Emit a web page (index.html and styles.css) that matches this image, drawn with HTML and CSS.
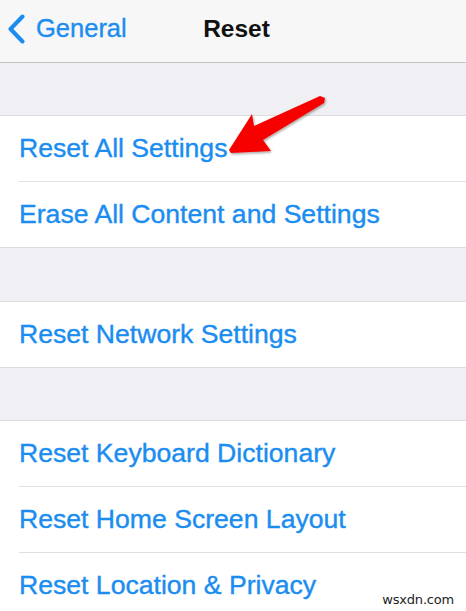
FILE: index.html
```html
<!DOCTYPE html>
<html lang="en">
<head>
<meta charset="utf-8">
<title>Reset</title>
<link rel="stylesheet" href="styles.css">
</head>
<body>
<div class="screen">
  <header class="nav">
    <a class="back" href="#">
      <svg class="chevron" width="18" height="30" viewBox="0 0 18 30"><path d="M15.5 2.5 L3.5 15 L15.5 27.5" fill="none" stroke="#1b8df0" stroke-width="4" stroke-linecap="round" stroke-linejoin="round"/></svg>
      <span>General</span>
    </a>
    <h1 class="title">Reset</h1>
    <div class="spacer"></div>
  </header>

  <div class="gap"></div>
  <ul class="group">
    <li class="row">Reset All Settings</li>
    <li class="row">Erase All Content and Settings</li>
  </ul>

  <div class="gap gap-wide"></div>
  <ul class="group">
    <li class="row">Reset Network Settings</li>
  </ul>

  <div class="gap"></div>
  <ul class="group">
    <li class="row">Reset Keyboard Dictionary</li>
    <li class="row">Reset Home Screen Layout</li>
    <li class="row">Reset Location &amp; Privacy</li>
  </ul>

  <svg class="arrow" width="466" height="611" viewBox="0 0 466 611">
    <defs>
      <filter id="sh" x="-20%" y="-20%" width="140%" height="140%">
        <feDropShadow dx="1" dy="1.5" stdDeviation="1.2" flood-color="#000" flood-opacity="0.35"/>
      </filter>
    </defs>
    <polygon filter="url(#sh)" fill="#f60000" points="229,150 252,114 254,126 320,96 325,98 324,103 263,140 271,151 231,153"/>
  </svg>

  <div class="watermark">wsxdn.com</div>
</div>
</body>
</html>
```
FILE: styles.css
```css
* { box-sizing: border-box; }
html, body {
  margin: 0;
  padding: 0;
}
body {
  width: 466px;
  height: 611px;
  overflow: hidden;
  background: #efeff4;
  font-family: "Liberation Sans", Arial, sans-serif;
}
.screen {
  position: relative;
  width: 466px;
  height: 611px;
  overflow: hidden;
}
.nav {
  height: 63px;
  background: #f7f7f8;
  border-bottom: 1px solid #c4c4c8;
  display: grid;
  grid-template-columns: 1fr auto 1fr;
  align-items: center;
  padding-bottom: 5px;
}
.back {
  display: flex;
  align-items: center;
  gap: 11px;
  padding-left: 7px;
  color: #1b8df0;
  text-decoration: none;
  font-size: 25.5px;
  -webkit-text-stroke: 0.35px #1b8df0;
}
.chevron { display: block; }
.title {
  margin: 0;
  padding-left: 7px;
  font-size: 24.5px;
  font-weight: bold;
  color: #111;
}
.gap {
  height: 52px;
  background: #efeff4;
}
.gap-wide { height: 53px; }
.group {
  list-style: none;
  margin: 0;
  padding: 0 0 0 19px;
  background: #fff;
  border-top: 1px solid #dcdcde;
  border-bottom: 1px solid #dcdcde;
}
.row {
  height: 66px;
  display: flex;
  align-items: center;
  color: #1b8df0;
  font-size: 26.6px;
  -webkit-text-stroke: 0.4px #1b8df0;
  border-bottom: 1px solid #e0e0e2;
}
.row:last-child {
  height: 65px;
  border-bottom: none;
}
.arrow {
  position: absolute;
  left: 0;
  top: 0;
  pointer-events: none;
}
.watermark {
  position: absolute;
  right: 12px;
  bottom: 4px;
  font-size: 13px;
  color: #222;
  font-family: "DejaVu Sans", sans-serif;
  letter-spacing: -0.2px;
}
```
